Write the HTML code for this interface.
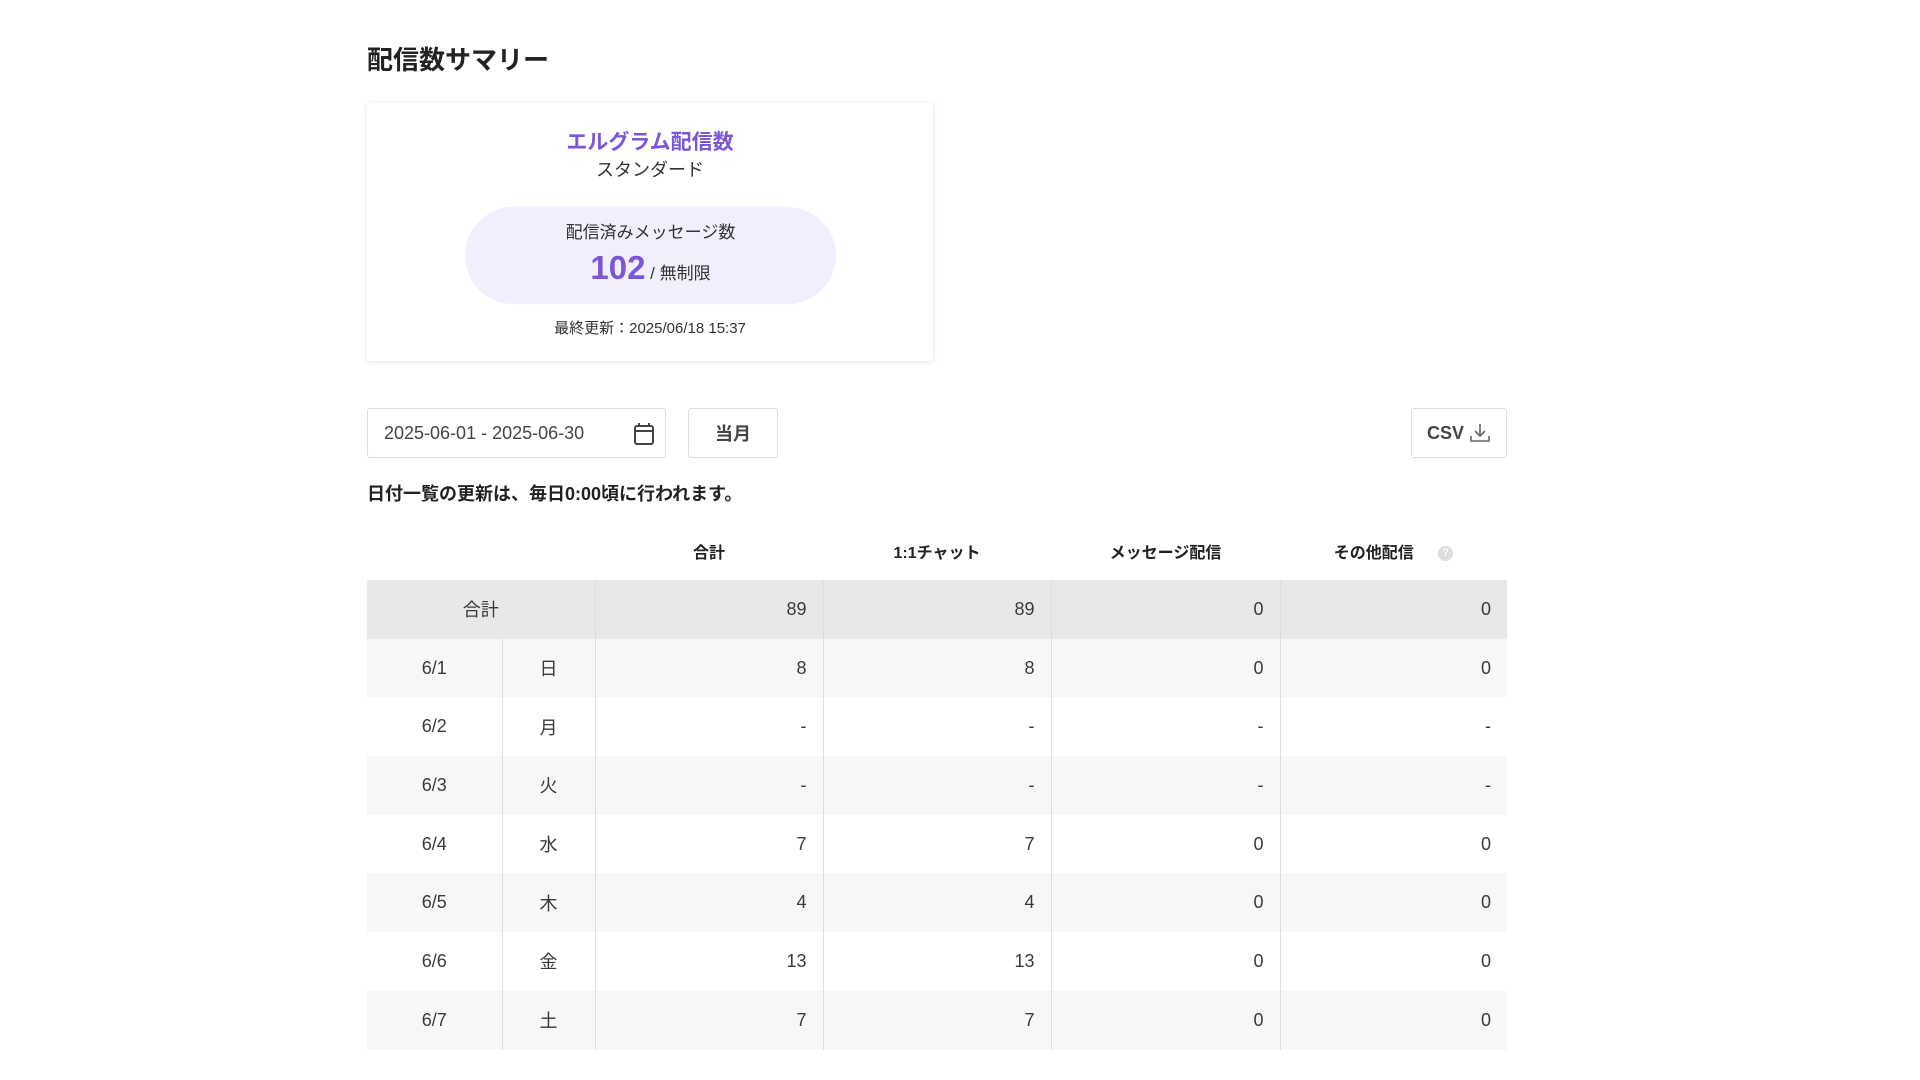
<!DOCTYPE html>
<html><head><meta charset="utf-8"><style>
*{box-sizing:border-box;margin:0;padding:0}
body{width:1920px;height:1080px;background:#fff;font-family:"Liberation Sans","Noto Sans CJK JP",sans-serif;color:#333;position:relative;overflow:hidden}
.abs{position:absolute}
h1{position:absolute;left:367px;top:40px;font-size:26px;font-weight:700;color:#222}
.card{left:367px;top:103px;width:566px;height:258px;background:#fff;box-shadow:0 1px 6px rgba(0,0,0,.12);border-radius:3px;text-align:center}
.t1{position:absolute;left:0;right:0;top:126px;font-size:21px;font-weight:700;color:#7b56d9;text-align:center}
.t2{position:absolute;left:0;right:0;top:156px;font-size:18px;color:#333;text-align:center}
.pill{left:465px;top:207px;width:371px;height:97px;background:#f1eefd;border-radius:49px;text-align:center}
.btn{border:1px solid #ddd;border-radius:3px;background:#fff;display:flex;align-items:center;justify-content:center;font-size:18px;color:#444}
table{position:absolute;left:367px;top:522px;width:1140px;border-collapse:collapse;font-size:18px}
th{height:58px;font-size:16px;font-weight:700;color:#222}
td{height:58.7px;border-left:1px solid #ddd;padding:0 16px;text-align:right;color:#3a3a3a}
td:first-child{border-left:none}
td.c{text-align:center}
tr.g td{background:#e8e8e8}
tr.s td{background:#f7f7f7}
</style></head><body>
<h1>配信数サマリー</h1>
<div class="abs card"></div>
<div class="abs t1" style="left:367px;width:566px">エルグラム配信数</div>
<div class="abs t2" style="left:367px;width:566px">スタンダード</div>
<div class="abs pill">
 <div style="margin-top:11px;font-size:17px;color:#333">配信済みメッセージ数</div>
 <div style="margin-top:6px"><span style="font-size:33px;font-weight:700;color:#7b56d9">102</span><span style="font-size:17px;color:#333"> / 無制限</span></div>
</div>
<div class="abs" style="left:367px;width:566px;top:317px;text-align:center;font-size:15px;color:#333">最終更新：2025/06/18 15:37</div>

<div class="abs btn" style="left:367px;top:408px;width:299px;height:50px;justify-content:flex-start;padding-left:16px">2025-06-01 - 2025-06-30
<svg style="position:absolute;right:10px;top:13px" width="22" height="24" viewBox="0 0 22 24" fill="none" stroke="#444" stroke-width="2"><rect x="2" y="4" width="18" height="18" rx="2"/><line x1="2" y1="9" x2="20" y2="9"/><line x1="6" y1="1" x2="6" y2="5"/><line x1="16" y1="1" x2="16" y2="5"/></svg></div>
<div class="abs btn" style="left:688px;top:408px;width:90px;height:50px;font-weight:700">当月</div>
<div class="abs btn" style="left:1411px;top:408px;width:96px;height:50px;font-weight:700">CSV&nbsp;
<svg width="22" height="22" viewBox="0 0 22 22" fill="none" stroke="#666" stroke-width="1.6"><path d="M11 2v12M6 9l5 5 5-5M2 14v5h18v-5"/></svg></div>
<div class="abs" style="left:367px;top:480px;font-size:18px;font-weight:700;color:#222">日付一覧の更新は、毎日0:00頃に行われます。</div>

<table>
<colgroup><col style="width:135px"><col style="width:93px"><col style="width:228px"><col style="width:228px"><col style="width:229px"><col style="width:227px"></colgroup>
<tr><th></th><th></th><th>合計</th><th>1:1チャット</th><th>メッセージ配信</th><th>その他配信 <span style="display:inline-block;width:15px;height:15px;border-radius:50%;background:#ddd;color:#fff;font-size:11px;line-height:15px;margin-left:20px;vertical-align:middle">?</span></th></tr>
<tr class="g"><td class="c" colspan="2">合計</td><td>89</td><td>89</td><td>0</td><td>0</td></tr>
<tr class="s"><td class="c">6/1</td><td class="c">日</td><td>8</td><td>8</td><td>0</td><td>0</td></tr>
<tr><td class="c">6/2</td><td class="c">月</td><td>-</td><td>-</td><td>-</td><td>-</td></tr>
<tr class="s"><td class="c">6/3</td><td class="c">火</td><td>-</td><td>-</td><td>-</td><td>-</td></tr>
<tr><td class="c">6/4</td><td class="c">水</td><td>7</td><td>7</td><td>0</td><td>0</td></tr>
<tr class="s"><td class="c">6/5</td><td class="c">木</td><td>4</td><td>4</td><td>0</td><td>0</td></tr>
<tr><td class="c">6/6</td><td class="c">金</td><td>13</td><td>13</td><td>0</td><td>0</td></tr>
<tr class="s"><td class="c">6/7</td><td class="c">土</td><td>7</td><td>7</td><td>0</td><td>0</td></tr>
</table>
</body></html>
